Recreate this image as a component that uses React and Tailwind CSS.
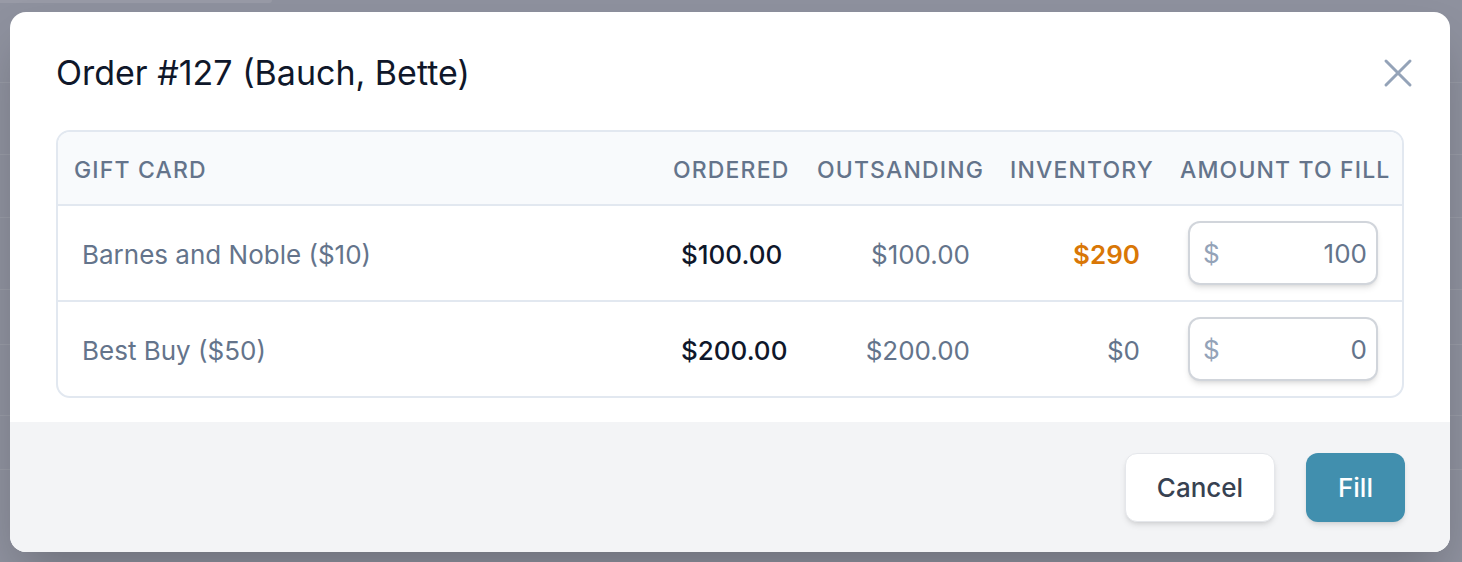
import React from "react";

const rows = [
  { name: "Barnes and Noble ($10)", ordered: "$100.00", outstanding: "$100.00", inventory: "$290", low: false, fill: "100" },
  { name: "Best Buy ($50)", ordered: "$200.00", outstanding: "$200.00", inventory: "$0", low: true, fill: "0" },
];

// faint rows of the page that sits under the overlay
const bgRows = [80, 72, 63, 72, 55, 71, 54, 95];

function XIcon() {
  return (
    <svg viewBox="0 0 24 24" fill="none" stroke="currentColor" strokeWidth="1.5" className="w-12 h-12">
      <path strokeLinecap="round" strokeLinejoin="round" d="M6 18L18 6M6 6l12 12" />
    </svg>
  );
}

export default function App() {
  return (
    <div
      className="relative w-[1462px] h-[562px] overflow-hidden bg-[#8e919e]"
      style={{ fontFamily: "Inter, 'Noto Sans', sans-serif" }}
    >
      {/* page behind the backdrop */}
      <div className="h-[3px] w-[272px] rounded-br-md bg-[#989aa6]" />
      <div className="flex flex-col">
        {bgRows.map((h, i) => (
          <div key={i} className="border-b border-[#979aa5]" style={{ height: h }} />
        ))}
      </div>

      {/* modal */}
      <div className="absolute left-[10px] top-[12px] w-[1440px] h-[540px] bg-white rounded-[16px] shadow-2xl overflow-hidden flex flex-col">
        <div className="flex items-center justify-between pl-[46px] pr-[28px] pt-[33px]">
          <h2 className="text-[34px] leading-[56px] text-[#0f172a] font-normal">Order #127 (Bauch, Bette)</h2>
          <button className="text-[#94a3b8]">
            <XIcon />
          </button>
        </div>

        <div className="mx-[46px] mt-[29px] border-2 border-[#e2e8f0] rounded-[14px] overflow-hidden">
          <div className="grid grid-cols-[1fr_144px_193px_170px_238px] bg-[#f8fafc] border-b-2 border-[#e2e8f0] h-[74px] pt-[3px] items-center text-[23px] leading-[32px] font-medium uppercase tracking-wider text-[#64748b] whitespace-nowrap">
            <div className="px-4">Gift Card</div>
            <div className="px-4 text-right">Ordered</div>
            <div className="px-4 text-right">Outsanding</div>
            <div className="px-4 text-right">Inventory</div>
            <div className="px-4 text-right">Amount to fill</div>
          </div>
          {rows.map((r, i) => (
            <div
              key={r.name}
              className={
                "grid grid-cols-[1fr_144px_193px_170px_238px] items-center text-[26px] leading-[40px] " +
                (i < rows.length - 1 ? "h-[96px] border-b-2 border-[#e2e8f0]" : "h-[94px]")
              }
            >
              <div className="px-6 pt-[4px] text-[#64748b]">{r.name}</div>
              <div className="px-6 pt-[4px] text-right font-medium text-[#0f172a]">{r.ordered}</div>
              <div className="px-6 pt-[4px] text-right text-[#64748b]">{r.outstanding}</div>
              <div className={"px-6 pt-[4px] text-right " + (r.low ? "text-[#64748b]" : "font-semibold text-[#d97706]")}>
                {r.inventory}
              </div>
              <div className="px-6">
                <div className="flex items-center h-[64px] rounded-[12px] border-2 border-[#d1d5db] bg-white shadow-md pl-[13px] pr-[9px] pt-[2px]">
                  <span className="text-[#94a3b8]">$</span>
                  <input
                    readOnly
                    value={r.fill}
                    className="flex-1 min-w-0 text-right bg-transparent outline-none text-[#64748b]"
                  />
                </div>
              </div>
            </div>
          ))}
        </div>

        <div className="mt-[24px] flex-1 bg-[#f3f4f6] flex items-center justify-end gap-[31px] pr-[45px]">
          <button className="h-[69px] w-[150px] rounded-[12px] bg-white border border-[#e5e7eb] shadow-md text-[26px] text-[#374151] font-medium">
            Cancel
          </button>
          <button className="h-[69px] w-[99px] rounded-[12px] bg-[#418fae] shadow-md text-[26px] text-white font-medium">
            Fill
          </button>
        </div>
      </div>
    </div>
  );
}
